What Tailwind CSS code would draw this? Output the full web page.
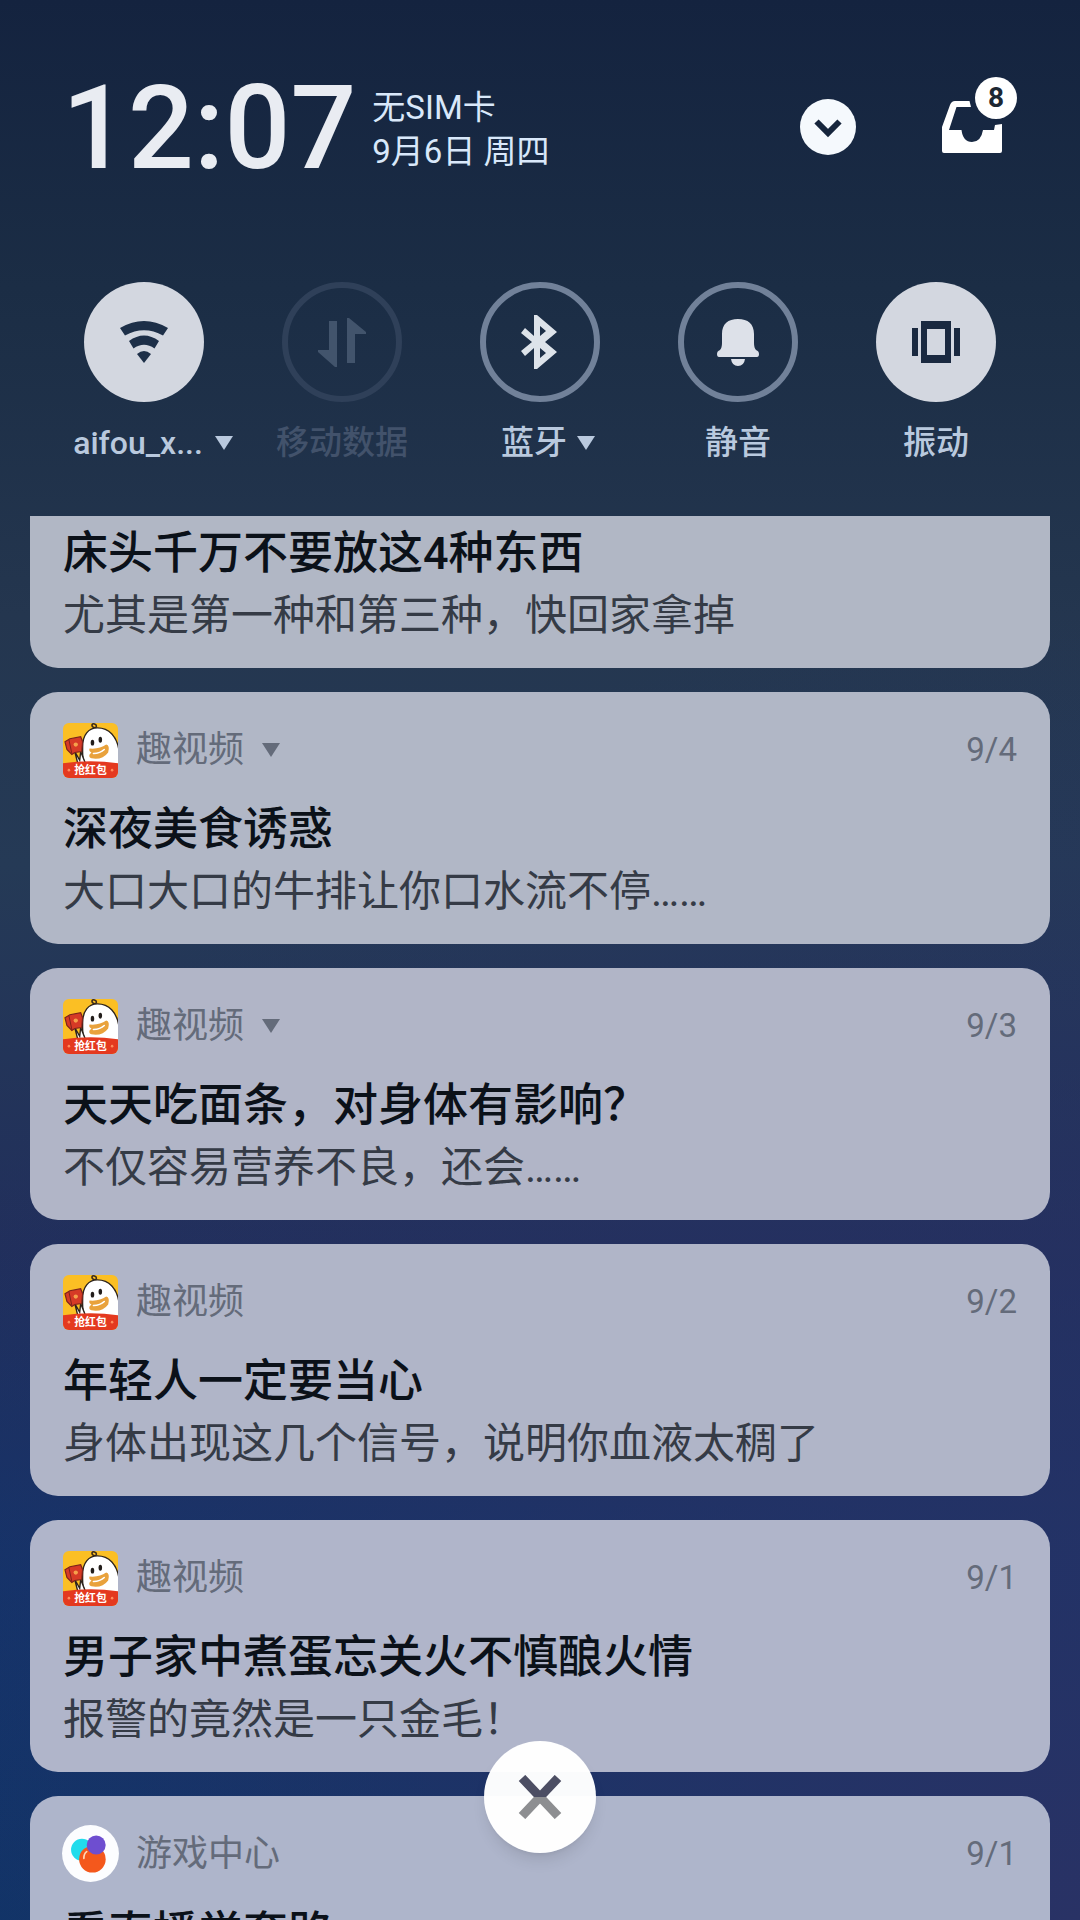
<!DOCTYPE html>
<html lang="zh-CN">
<head>
<meta charset="utf-8">
<meta name="viewport" content="width=device-width, initial-scale=1">
<title>通知中心</title>
<script src="https://cdn.jsdelivr.net/npm/@tailwindcss/browser@4"></script>
</head>
<body class="h-screen overflow-hidden bg-[radial-gradient(circle_at_100%_100%,#293265,transparent_60%),linear-gradient(#14233f,#1b2d45_15%,#24364f_32%,#253a56_45%,#212f5c_65%,#13336a_82%,#0d3468)] font-['Roboto','Noto_Sans_CJK_SC',sans-serif]">

<svg class="absolute size-0" aria-hidden="true">
  <symbol id="duck" viewBox="0 0 56 56">
    <rect width="56" height="56" fill="#fbbf24"/>
    <path d="M33 5C28 4 29 0 32 1s2 3 1 4" fill="none" stroke="#3b2b1c" stroke-width="1.6"/>
    <path d="M25 44C19 39 20 31 20 24 20 12 26 5 35 5 47 5 55 14 57 28v16z" fill="#fff" stroke="#2d241d" stroke-width="1.4"/>
    <path d="M12 29l3 12 9 3-6-15-1 9z" fill="#fff" stroke="#2d241d" stroke-width="1.4"/>
    <path d="M2 19l5-3 11-2 2 5-1 10-7 1-3 2-5-5z" fill="#d63a26" stroke="#7d231b" stroke-width="1.2"/>
    <path d="M6 17l3 14" stroke="#7d231b" stroke-width="1"/>
    <circle cx="13" cy="22" r="2.2" fill="#f5a04b"/>
    <ellipse cx="30" cy="20" rx="1.8" ry="3" fill="#221d1a"/>
    <ellipse cx="38" cy="17" rx="1.800" ry="3" fill="#221d1a"/>
    <path d="M27 26q10 1 17-4 4 1 2 8-6 8-17 6-3-1-2-4l2-2q-3-1-2-4z" fill="#e9a23c"/>
    <path d="M31 31q7 0 11-4" fill="none" stroke="#fff" stroke-width="1.6" stroke-linecap="round"/>
    <path d="M0 41q28-4 56 0v15H0z" fill="#e4391f"/>
    <circle cx="6" cy="48" r="1.3" fill="#ff8b5c"/><circle cx="50" cy="48" r="1.3" fill="#ff8b5c"/>
    <text x="28" y="52" text-anchor="middle" font-size="11" font-weight="700" fill="#fff">抢红包</text>
  </symbol>
</svg>

<div class="flex h-full flex-col">
  <header class="flex items-start pt-[77px] pr-[63px] pl-[62px]">
    <time class="text-[116px] leading-[102px] font-medium text-[#e9ecf2]" datetime="12:07">12:07</time>
    <p class="mt-[9px] ml-4 text-[33px] leading-11 text-[#d9e8fa]">无SIM卡<br>9月6日 周四</p>
    <button type="button" aria-label="展开" class="mt-[22px] ml-auto size-14 rounded-full bg-[#f5f9fd]">
      <svg viewBox="0 0 56 56" class="size-14" fill="none" stroke="#16253c" stroke-width="6"><path d="M16.500 22.500 28 34 39.500 22.500"/></svg>
    </button>
    <button type="button" aria-label="收纳的通知" class="relative ml-[86px] h-19 w-[75px]">
      <svg viewBox="0 0 75 76" class="h-19 w-[75px]" fill="#fff">
        <path fill-rule="evenodd" d="M0 74V50L8 28Q9.500 24 13 24H27.500L29 30H14.500L7 53H19.500Q21 65 30 65T41 53H52L53 48 60 47V74Q60 76 58 76H2Q0 76 0 74z"/>
        <circle cx="54" cy="21" r="21"/>
      </svg>
      <span class="absolute top-0 right-0 grid size-[42px] place-items-center text-[28px] leading-none font-bold text-[#1d2733]">8</span>
    </button>
  </header>

  <nav class="grid grid-cols-5 px-[45px] pt-[103px] text-[33px] leading-10 font-medium text-[#b9c9de]">
    <button type="button" class="flex flex-col items-center gap-[21px]">
      <span class="grid size-[120px] place-items-center rounded-full bg-[#d3d7e0]">
        <svg viewBox="0 0 48 42" class="h-[42px] w-12" fill="#1d2f48"><path d="M0 7Q24-7 48 7L43 14.500Q24 4 5 14.500z"/><path d="M9 20Q24 9 39 20L34.500 27.500Q24 20 13.500 27.500z"/><path d="M17 33Q24 27 31 33L24 42z"/></svg>
      </span>
      <span class="flex items-center gap-3 pl-[18px] text-[32px]">aifou_x...<svg viewBox="0 0 18 14" class="h-3.5 w-[18px]" fill="currentColor"><path d="M0 0h18L9 14z"/></svg></span>
    </button>
    <button type="button" disabled class="flex flex-col items-center gap-[21px] text-[#42526b]">
      <span class="grid size-[120px] place-items-center rounded-full border-6 border-[#2f4059]">
        <svg viewBox="0 0 50 50" class="size-[50px]" fill="#42546c"><path d="M12 4h8v46h-2L1 35v-2h11zM30 1h2L49 15v2H38v29h-8z"/></svg>
      </span>
      <span>移动数据</span>
    </button>
    <button type="button" class="flex flex-col items-center gap-[21px]">
      <span class="grid size-[120px] place-items-center rounded-full border-6 border-[#718199]">
        <svg viewBox="0 0 38 54" class="h-[54px] w-[38px]" fill="#dde3ea" fill-rule="evenodd"><path d="M13 0h3L36 17 24 27 36 37 16 54h-3V33L4 41 0 36 11 27 0 18 4 13 13 21zM19 11v10l6-5zM19 33v10l6-5z"/></svg>
      </span>
      <span class="flex items-center gap-2.5 pl-4">蓝牙<svg viewBox="0 0 18 14" class="h-3.5 w-[18px]" fill="currentColor"><path d="M0 0h18L9 14z"/></svg></span>
    </button>
    <button type="button" class="flex flex-col items-center gap-[21px]">
      <span class="grid size-[120px] place-items-center rounded-full border-6 border-[#718199]">
        <svg viewBox="0 0 42 48" class="h-12 w-[42px]" fill="#dde1e9"><path d="M5 16C5 6 11 1 21 1s16 5 16 15v9q0 5 2 7 3 1 3 4 0 3-2 3H2q-2 0-2-3 0-3 3-4 2-2 2-7zM14 41h14q-1 7-7 7t-7-7z"/></svg>
      </span>
      <span>静音</span>
    </button>
    <button type="button" class="flex flex-col items-center gap-[21px]">
      <span class="grid size-[120px] place-items-center rounded-full bg-[#d3d7e0]">
        <svg viewBox="0 0 48 42" class="h-[42px] w-12" fill="#1a2940" fill-rule="evenodd"><path d="M0 7h6v28H0zM42 7h6v28h-6zM9 0h30v42H9zM15 8v26h18V8z"/></svg>
      </span>
      <span>振动</span>
    </button>
  </nav>

  <main class="mt-[53px] flex min-h-0 flex-1 flex-col gap-6 overflow-hidden px-[30px]">
    <article class="shrink-0 rounded-b-[28px] bg-[#b1b7c5] px-[33px] pt-1.5 pb-[22px]">
      <h2 class="text-[45px] leading-16 font-medium text-[#0b1119]">床头千万不要放这4种东西</h2>
      <p class="text-[42px] leading-15 text-[#353b46]">尤其是第一种和第三种，快回家拿掉</p>
    </article>

    <article class="shrink-0 rounded-[28px] bg-[#b1b7c6] px-[33px] pt-7 pb-[22px]">
      <div class="flex h-15 items-center text-[36px] text-[#646b7a]">
        <svg class="mr-[18px] size-[55px] rounded-md"><use href="#duck"/></svg>
        <span>趣视频</span>
        <svg viewBox="0 0 18 14" class="ml-[18px] h-3.5 w-[18px]" fill="currentColor"><path d="M0 0h18L9 14z"/></svg>
        <time class="ml-auto text-[33px]">9/4</time>
      </div>
      <h2 class="mt-[18px] text-[45px] leading-16 font-medium text-[#0b1119]">深夜美食诱惑</h2>
      <p class="text-[42px] leading-15 text-[#353b46]">大口大口的牛排让你口水流不停……</p>
    </article>

    <article class="shrink-0 rounded-[28px] bg-[#b1b5c7] px-[33px] pt-7 pb-[22px]">
      <div class="flex h-15 items-center text-[36px] text-[#646b7a]">
        <svg class="mr-[18px] size-[55px] rounded-md"><use href="#duck"/></svg>
        <span>趣视频</span>
        <svg viewBox="0 0 18 14" class="ml-[18px] h-3.5 w-[18px]" fill="currentColor"><path d="M0 0h18L9 14z"/></svg>
        <time class="ml-auto text-[33px]">9/3</time>
      </div>
      <h2 class="mt-[18px] text-[45px] leading-16 font-medium text-[#0b1119]">天天吃面条，对身体有影响？</h2>
      <p class="text-[42px] leading-15 text-[#353b46]">不仅容易营养不良，还会……</p>
    </article>

    <article class="shrink-0 rounded-[28px] bg-[#b0b5c8] px-[33px] pt-7 pb-[22px]">
      <div class="flex h-15 items-center text-[36px] text-[#646b7a]">
        <svg class="mr-[18px] size-[55px] rounded-md"><use href="#duck"/></svg>
        <span>趣视频</span>
        <time class="ml-auto text-[33px]">9/2</time>
      </div>
      <h2 class="mt-[18px] text-[45px] leading-16 font-medium text-[#0b1119]">年轻人一定要当心</h2>
      <p class="text-[42px] leading-15 text-[#353b46]">身体出现这几个信号，说明你血液太稠了</p>
    </article>

    <article class="shrink-0 rounded-[28px] bg-[#b0b5ca] px-[33px] pt-7 pb-[22px]">
      <div class="flex h-15 items-center text-[36px] text-[#646b7a]">
        <svg class="mr-[18px] size-[55px] rounded-md"><use href="#duck"/></svg>
        <span>趣视频</span>
        <time class="ml-auto text-[33px]">9/1</time>
      </div>
      <h2 class="mt-[18px] text-[45px] leading-16 font-medium text-[#0b1119]">男子家中煮蛋忘关火不慎酿火情</h2>
      <p class="text-[42px] leading-15 text-[#353b46]">报警的竟然是一只金毛！</p>
    </article>

    <article class="shrink-0 rounded-[28px] bg-[#aeb5cb] px-[33px] pt-7 pb-[22px]">
      <div class="flex h-15 items-center text-[36px] text-[#646b7a]">
        <svg viewBox="0 0 58 58" class="mr-[18px] size-[55px] overflow-visible">
          <circle cx="29" cy="28" r="30" fill="#fcfdff"/>
          <circle cx="20" cy="24" r="11.500" fill="#22dcec"/>
          <circle cx="31" cy="34" r="14" fill="#f4581c"/>
          <circle cx="35" cy="19" r="10" fill="#6e4ed0"/>
          <path d="M22 33q0-5 3-7" fill="none" stroke="#ffd9b8" stroke-width="1.8" stroke-linecap="round"/>
        </svg>
        <span>游戏中心</span>
        <time class="ml-auto text-[33px]">9/1</time>
      </div>
      <h2 class="mt-[18px] text-[45px] leading-16 font-medium text-[#0b1119]">看直播学套路</h2>
    </article>
  </main>
</div>

<button type="button" aria-label="清除全部" class="fixed bottom-[67px] left-1/2 grid size-28 -translate-x-1/2 place-items-center rounded-full bg-white/98 shadow-lg">
  <svg viewBox="0 0 44 44" class="size-11" fill="none" stroke-width="9">
    <linearGradient id="split" x2="0" y2="44" gradientUnits="userSpaceOnUse"><stop offset=".49" stop-color="#4c4e63"/><stop offset=".49" stop-color="#8d8e91"/></linearGradient>
    <path d="M4 3 40 41M40 3 4 41" stroke="url(#split)"/>
  </svg>
</button>
</body>
</html>
